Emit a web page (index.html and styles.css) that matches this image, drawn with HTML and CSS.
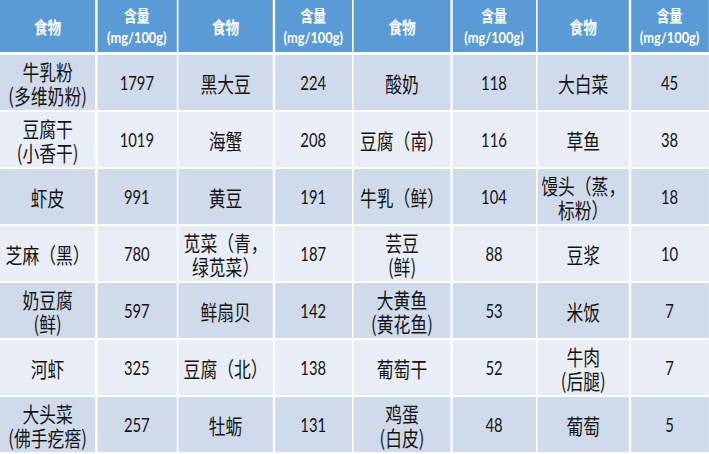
FILE: index.html
```html
<!DOCTYPE html>
<html lang="zh">
<head>
<meta charset="utf-8">
<link rel="stylesheet" href="styles.css">
</head>
<body>
<div class="frame">
<div class="table">
  <div class="cell head">食物</div><div class="cell head num">含量<br>(mg/100g)</div>
  <div class="cell head">食物</div><div class="cell head num">含量<br>(mg/100g)</div>
  <div class="cell head">食物</div><div class="cell head num">含量<br>(mg/100g)</div>
  <div class="cell head">食物</div><div class="cell head num">含量<br>(mg/100g)</div>

  <div class="cell dark">牛乳粉<br>(多维奶粉)</div><div class="cell dark num">1797</div>
  <div class="cell dark">黑大豆</div><div class="cell dark num">224</div>
  <div class="cell dark">酸奶</div><div class="cell dark num">118</div>
  <div class="cell dark">大白菜</div><div class="cell dark num">45</div>

  <div class="cell light">豆腐干<br>(小香干)</div><div class="cell light num">1019</div>
  <div class="cell light">海蟹</div><div class="cell light num">208</div>
  <div class="cell light">豆腐（南）</div><div class="cell light num">116</div>
  <div class="cell light">草鱼</div><div class="cell light num">38</div>

  <div class="cell dark">虾皮</div><div class="cell dark num">991</div>
  <div class="cell dark">黄豆</div><div class="cell dark num">191</div>
  <div class="cell dark">牛乳（鲜）</div><div class="cell dark num">104</div>
  <div class="cell dark">馒头（蒸，<br>标粉）</div><div class="cell dark num">18</div>

  <div class="cell light">芝麻（黑）</div><div class="cell light num">780</div>
  <div class="cell light">苋菜（青，<br>绿苋菜）</div><div class="cell light num">187</div>
  <div class="cell light">芸豆<br>(鲜)</div><div class="cell light num">88</div>
  <div class="cell light">豆浆</div><div class="cell light num">10</div>

  <div class="cell dark">奶豆腐<br>(鲜)</div><div class="cell dark num">597</div>
  <div class="cell dark">鲜扇贝</div><div class="cell dark num">142</div>
  <div class="cell dark">大黄鱼<br>(黄花鱼)</div><div class="cell dark num">53</div>
  <div class="cell dark">米饭</div><div class="cell dark num">7</div>

  <div class="cell light">河虾</div><div class="cell light num">325</div>
  <div class="cell light">豆腐（北）</div><div class="cell light num">138</div>
  <div class="cell light">葡萄干</div><div class="cell light num">52</div>
  <div class="cell light">牛肉<br>(后腿)</div><div class="cell light num">7</div>

  <div class="cell dark">大头菜<br>(佛手疙瘩)</div><div class="cell dark num">257</div>
  <div class="cell dark">牡蛎</div><div class="cell dark num">131</div>
  <div class="cell dark">鸡蛋<br>(白皮)</div><div class="cell dark num">48</div>
  <div class="cell dark">葡萄</div><div class="cell dark num">5</div>
</div>
</div>
</body>
</html>
```

FILE: styles.css
```css
html, body {
  margin: 0;
  padding: 0;
  background: #ffffff;
}
.frame {
  width: 709px;
  height: 454px;
  overflow: hidden;
}
.table {
  width: 886px;
  display: grid;
  grid-template-columns:
    minmax(0, 119px) minmax(0, 99px) minmax(0, 118px) minmax(0, 96px)
    minmax(0, 121px) minmax(0, 104px) minmax(0, 114px) minmax(0, 97px);
  grid-template-rows: 53px repeat(7, 55px);
  column-gap: 2.5px;
  row-gap: 2px;
  background: #ffffff;
  transform: scaleX(0.8);
  transform-origin: 0 0;
  font-family: "Noto Sans CJK SC", sans-serif;
}
.cell {
  display: flex;
  align-items: center;
  justify-content: center;
  text-align: center;
  white-space: nowrap;
  min-width: 0;
  font-size: 21px;
  line-height: 24px;
  color: #141414;
}
.cell.num {
  font-family: "Lato", "Noto Sans CJK SC", sans-serif;
  font-size: 18.5px;
}
.head {
  background: #5b9bd5;
  color: #ffffff;
  font-weight: 700;
  font-size: 17px;
  line-height: 21px;
  margin-bottom: 1px;
}
.cell.head.num {
  font-size: 16px;
  line-height: 21px;
  font-family: "Lato", "Noto Sans CJK SC", sans-serif;
}
.dark {
  background: #cfdbeb;
}
.light {
  background: #e8edf6;
}
```
